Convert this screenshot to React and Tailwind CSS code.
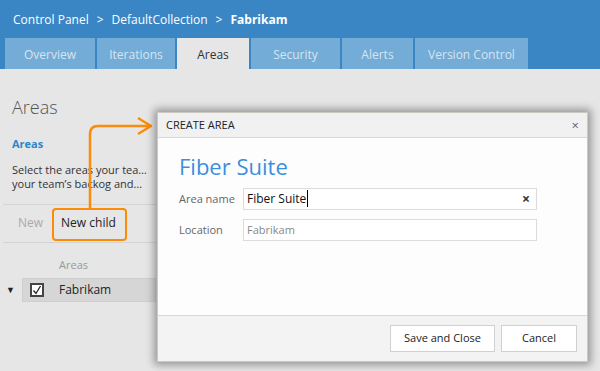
import React from "react";

const tabs = [
  { label: "Overview", w: "w-[90px]" },
  { label: "Iterations", w: "w-[78px]" },
  { label: "Areas", w: "w-[72px]", active: true },
  { label: "Security", w: "w-[89px]" },
  { label: "Alerts", w: "w-[71px]" },
  { label: "Version Control", w: "w-[113px]" },
];

const App = () => {
  return (
    <div className="relative w-[600px] h-[371px] overflow-hidden bg-[#e6e6e6] font-['Open_Sans',sans-serif] text-[#222]">
      {/* Header */}
      <div className="bg-[#3a86c5] h-[69px] flex flex-col">
        <div className="h-[38px] flex items-center pl-[13px] pt-[1px] text-[12px] text-white gap-[8px]">
          <span>Control Panel</span>
          <span>&gt;</span>
          <span>DefaultCollection</span>
          <span>&gt;</span>
          <span className="font-bold">Fabrikam</span>
        </div>
        <div className="flex items-end pl-[5px] gap-[2px] h-[31px]">
          {tabs.map((t) => (
            <div
              key={t.label}
              className={`${t.w} h-[31px] pt-[2px] flex items-center justify-center text-[12px] ${
                t.active ? "bg-[#e6e6e6] text-[#333]" : "bg-[#74acd8] text-[#d6e4ef]"
              }`}
            >
              {t.label}
            </div>
          ))}
        </div>
      </div>

      {/* Left page */}
      <div className="w-[156px] pl-[12px] pt-[26px]">
        <div className="text-[18px] font-light text-[#555] leading-[24px]">Areas</div>
        <div className="mt-[17px] text-[11px] font-bold text-[#2c86cf]">Areas</div>
        <div className="mt-[10px] text-[11px] leading-[14px] text-[#333] whitespace-nowrap">
          <div>Select the areas your tea…</div>
          <div>your team’s backog and…</div>
        </div>
      </div>
      <div className="ml-[3px] w-[153px] mt-[13px] border-t border-[#d4d4d4]" />
      <div className="flex items-center h-[37px] text-[12px]">
        <span className="ml-[18px] text-[#aaa]">New</span>
        <span className="ml-[18px] text-[#222]">New child</span>
      </div>
      <div className="ml-[3px] w-[153px] border-t border-[#d4d4d4]" />
      <div className="ml-[59px] mt-[14px] text-[11px] text-[#999]">Areas</div>
      <div className="flex items-center mt-[5px]">
        <span className="ml-[6px] w-[16px] text-[9px] text-[#222]">▼</span>
        <div className="w-[134px] h-[24px] bg-[#d6d6d6] border border-[#cfcfcf] flex items-center">
          <div className="ml-[7px] w-[14px] h-[14px] border-2 border-[#444] bg-white flex items-center justify-center">
            <svg width="10" height="10" viewBox="0 0 10 10">
              <path d="M1.5 5.5 L4 8.5 L8.5 1" fill="none" stroke="#222" strokeWidth="1.3" />
            </svg>
          </div>
          <span className="ml-[15px] text-[12px] text-[#222]">Fabrikam</span>
        </div>
      </div>

      {/* Orange callout */}
      <div className="absolute left-[52px] top-[208px] w-[75px] h-[33px] rounded-[4px] border-2 border-[#fb8c0a]" />
      <svg className="absolute left-0 top-0" width="600" height="371">
        <path
          d="M90 208 V134 Q90 126 98 126 H151 M138 118 L151 126 L138 134"
          fill="none"
          stroke="#fb8c0a"
          strokeWidth="2.5"
          strokeLinejoin="round"
        />
      </svg>

      {/* Dialog */}
      <div className="absolute left-[157px] top-[112px] w-[431px] h-[250px] bg-white border border-[#c9c9c0] shadow-[0_0_8px_3px_rgba(0,0,0,0.35)] flex flex-col">
        <div className="h-[25px] bg-[#f1f1f1] border-b border-[#d8d8cc] flex items-center justify-between px-[8px]">
          <span className="text-[11px] text-[#222]">CREATE AREA</span>
          <span className="text-[13px] text-[#666] leading-none">×</span>
        </div>
        <div className="flex-1 bg-[#fdfdfd] pl-[21px] pt-[14px]">
          <div className="text-[22px] text-[#3b8ee0] leading-[28px]">Fiber Suite</div>
          <div className="flex items-center mt-[8px]">
            <span className="w-[64px] text-[11px] text-[#666]">Area name</span>
            <div className="w-[294px] h-[22px] bg-white border border-[#dcdcdc] flex items-center justify-between px-[3px]">
              <span className="text-[12px] text-[#111]">
                Fiber Suite<span className="border-r border-black ml-[1px]" />
              </span>
              <span className="text-[14px] font-bold text-[#333] mr-[3px] leading-none">×</span>
            </div>
          </div>
          <div className="flex items-center mt-[9px]">
            <span className="w-[64px] text-[11px] text-[#666]">Location</span>
            <div className="w-[294px] h-[22px] bg-white border border-[#dcdcdc] flex items-center px-[3px]">
              <span className="text-[11px] text-[#888]">Fabrikam</span>
            </div>
          </div>
        </div>
        <div className="h-[46px] bg-[#f3f3f3] border-t border-[#d8d8cc] flex items-center justify-end gap-[6px] pr-[10px]">
          <div className="w-[105px] h-[27px] bg-white border border-[#d0d0d0] flex items-center justify-center text-[11px] text-[#222]">
            Save and Close
          </div>
          <div className="w-[76px] h-[27px] bg-white border border-[#d0d0d0] flex items-center justify-center text-[11px] text-[#222]">
            Cancel
          </div>
        </div>
      </div>
    </div>
  );
};

export default App;
